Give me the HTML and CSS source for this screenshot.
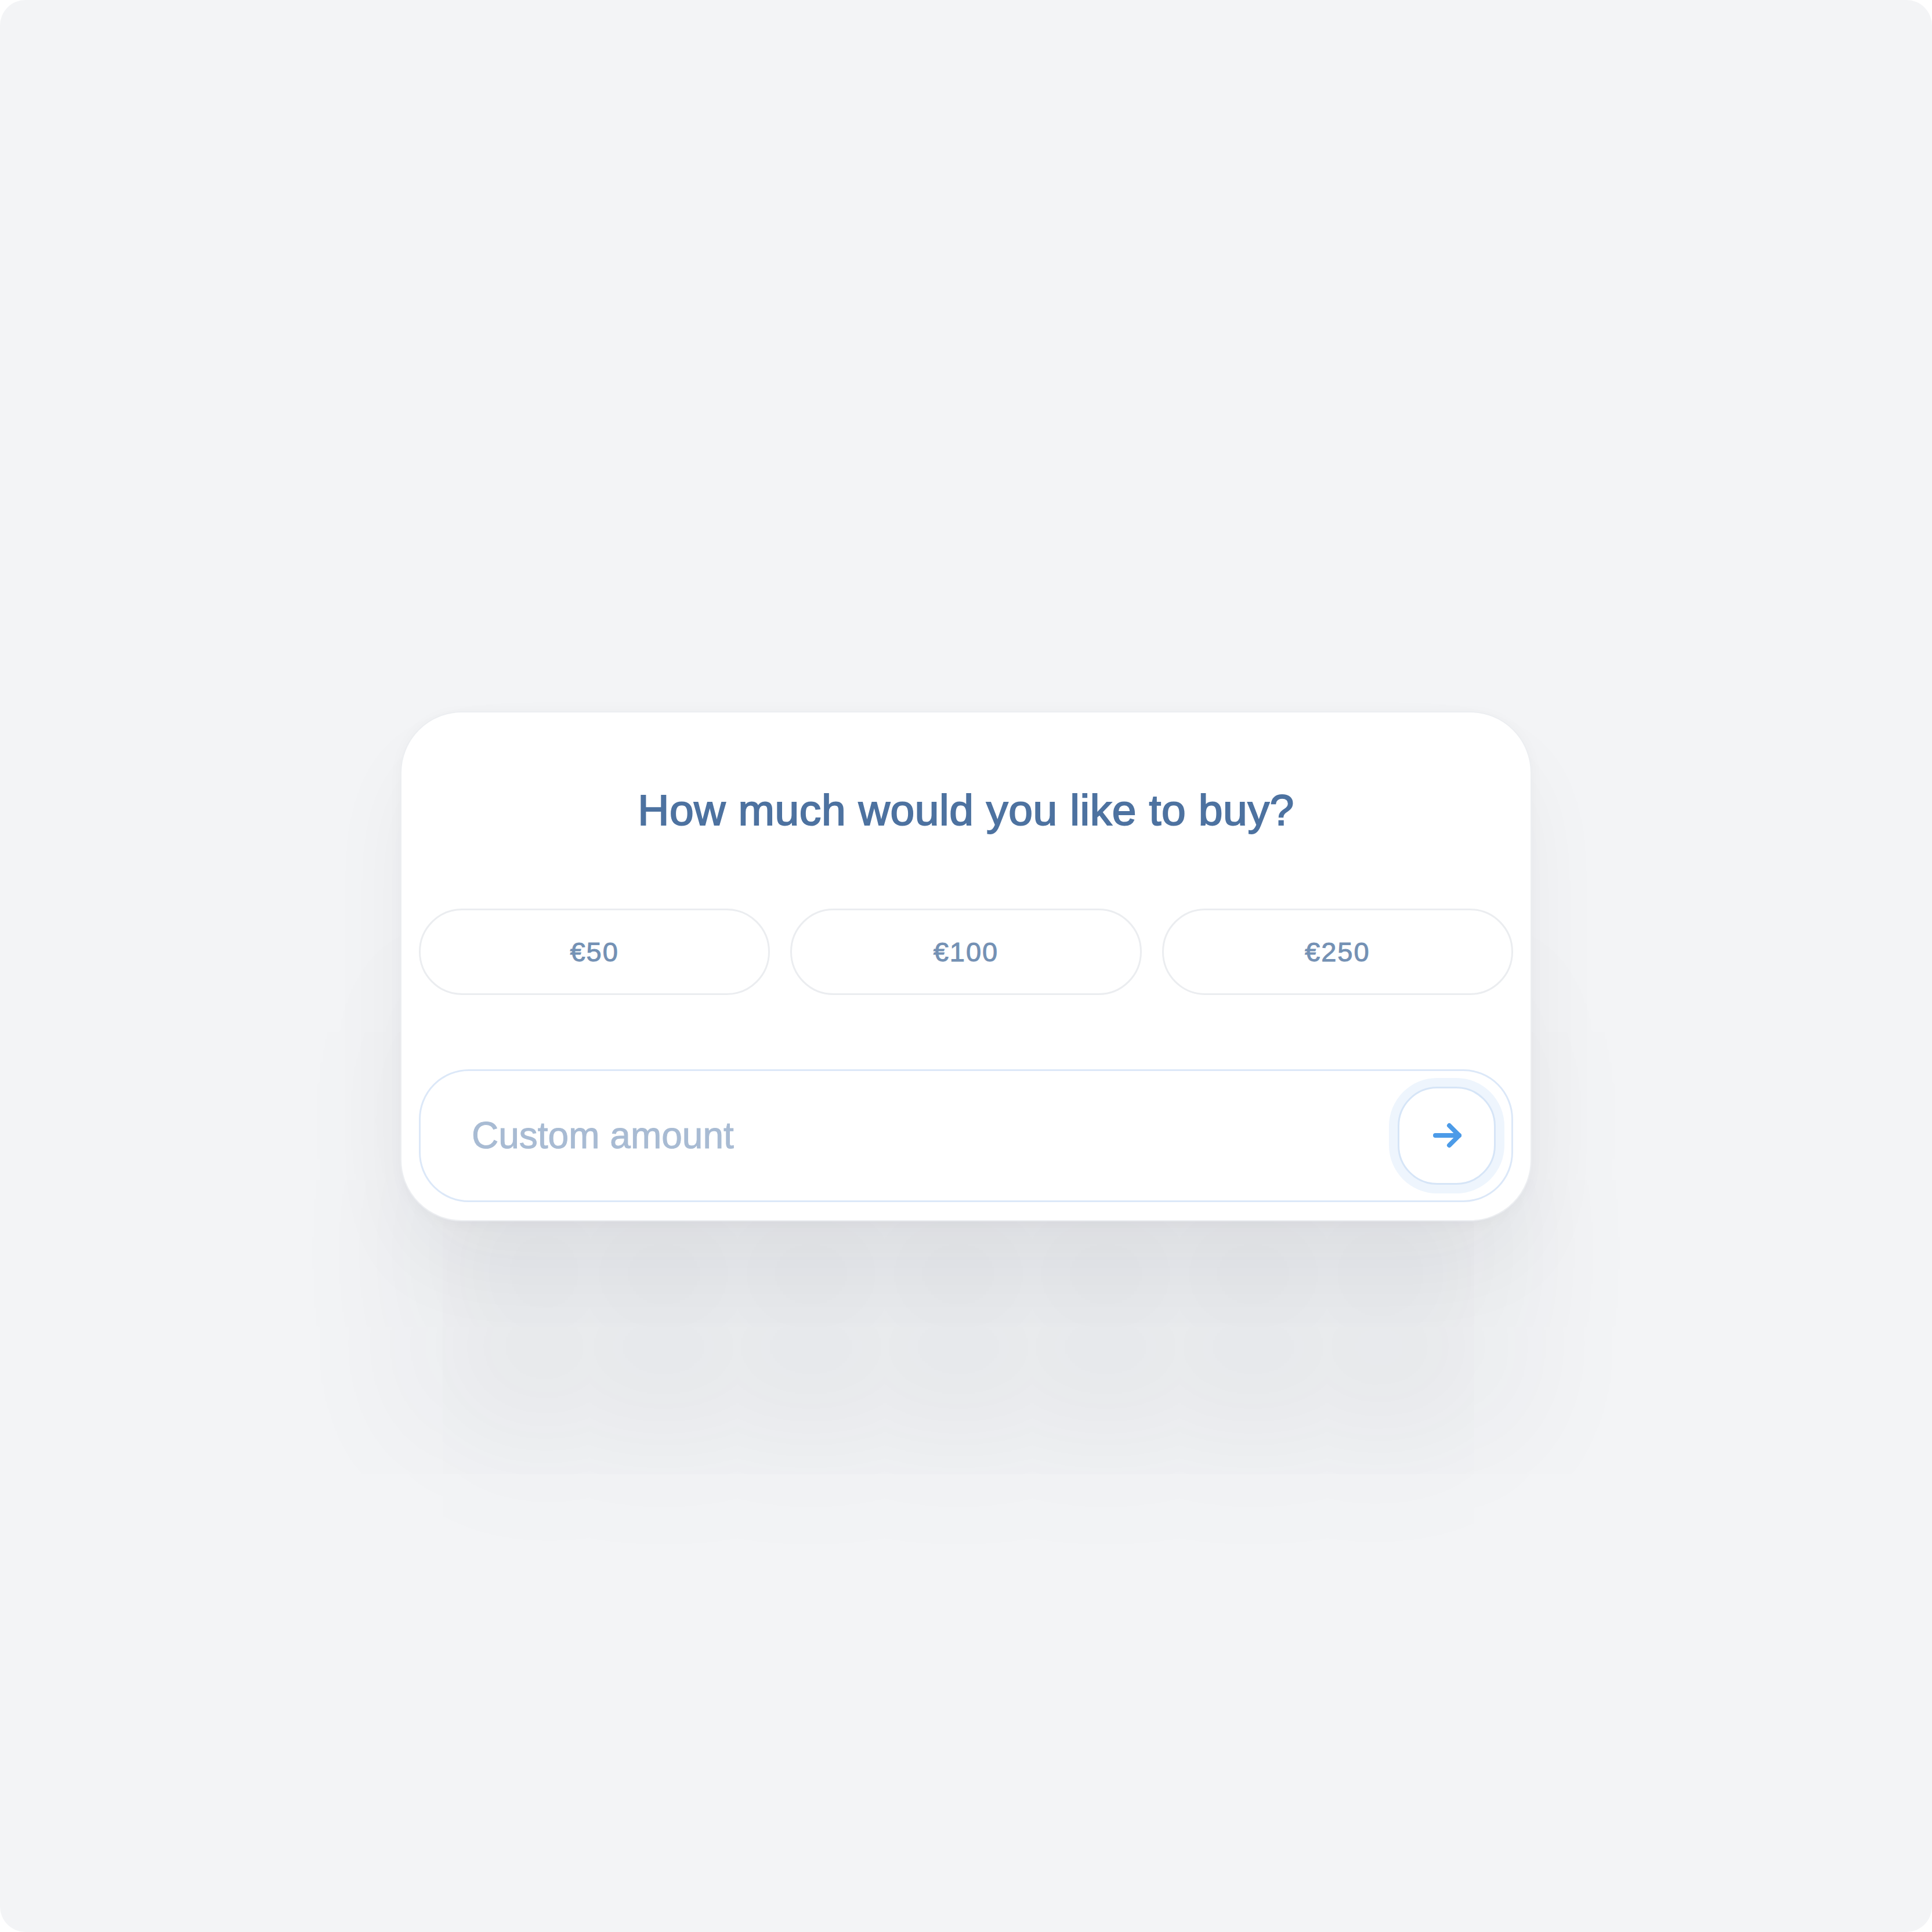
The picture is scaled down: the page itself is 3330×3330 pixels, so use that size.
FILE: index.html
```html
<!DOCTYPE html>
<html lang="en">
<head>
<meta charset="utf-8">
<title>How much would you like to buy?</title>
<link rel="stylesheet" href="styles.css">
</head>
<body>
<div class="frame">
  <section class="card">
    <h1 class="title">How much would you like to buy?</h1>
    <div class="options">
      <button class="option" type="button">€50</button>
      <button class="option" type="button">€100</button>
      <button class="option" type="button">€250</button>
    </div>
    <form class="custom">
      <input class="custom-input" type="text" placeholder="Custom amount">
      <button class="submit" type="button" aria-label="Continue">
        <svg class="arrow" width="64" height="64" viewBox="0 0 64 64" fill="none">
          <path d="M12 32H53" stroke="currentColor" stroke-width="8" stroke-linecap="round"/>
          <path d="M36 15L53 32L36 49" stroke="currentColor" stroke-width="8" stroke-linecap="round" stroke-linejoin="round"/>
        </svg>
      </button>
    </form>
  </section>
</div>
</body>
</html>
```
FILE: styles.css
```css
html, body {
  margin: 0;
  padding: 0;
  background: #ffffff;
}

.frame {
  width: 3330px;
  height: 3330px;
  box-sizing: border-box;
  background: #f3f4f6;
  border-radius: 44px;
  display: flex;
  align-items: center;
  justify-content: center;
  font-family: "Liberation Sans", Arial, sans-serif;
}

.card {
  width: 1950px;
  box-sizing: border-box;
  background: #ffffff;
  border: 2px solid #eceef1;
  border-radius: 106px;
  padding: 131px 30px 31px;
  display: flex;
  flex-direction: column;
  box-shadow:
    0 4px 24px rgba(30, 41, 59, 0.03),
    0 80px 160px -20px rgba(30, 41, 59, 0.06),
    0 420px 580px -40px rgba(30, 41, 59, 0.065);
}

.title {
  margin: 0 0 132px;
  font-size: 75px;
  line-height: 75px;
  font-weight: 400;
  letter-spacing: 0.6px;
  color: #4d72a0;
  -webkit-text-stroke: 2px #4d72a0;
  text-align: center;
}

.options {
  display: grid;
  grid-template-columns: repeat(3, 1fr);
  gap: 35px;
  margin-bottom: 128px;
}

.option {
  height: 149px;
  box-sizing: border-box;
  border: 3px solid #ebedf0;
  border-radius: 999px;
  background: #ffffff;
  font-family: "Liberation Sans", Arial, sans-serif;
  font-size: 47px;
  letter-spacing: 2px;
  color: #7491b4;
  -webkit-text-stroke: 1px #7491b4;
  padding: 0;
  cursor: pointer;
}

.custom {
  height: 229px;
  box-sizing: border-box;
  border: 3px solid #dce8f8;
  border-radius: 86px;
  display: flex;
  align-items: center;
  padding: 0 27px 0 88px;
  margin: 0;
}

.custom-input {
  flex: 1;
  min-width: 0;
  border: 0;
  outline: none;
  background: transparent;
  padding: 0;
  font-family: "Liberation Sans", Arial, sans-serif;
  font-size: 64px;
  color: #4d72a0;
  -webkit-text-stroke: 1px #a8bbd3;
}

.custom-input::placeholder {
  color: #a8bbd3;
  opacity: 1;
}

.submit {
  width: 169px;
  height: 169px;
  box-sizing: border-box;
  border: 3px solid #d6e5f7;
  border-radius: 68px;
  background: #ffffff;
  box-shadow: 0 0 0 15px #eef5fd;
  display: flex;
  align-items: center;
  justify-content: center;
  padding: 0;
  color: #4c9be8;
  cursor: pointer;
}

.arrow {
  display: block;
}
```
